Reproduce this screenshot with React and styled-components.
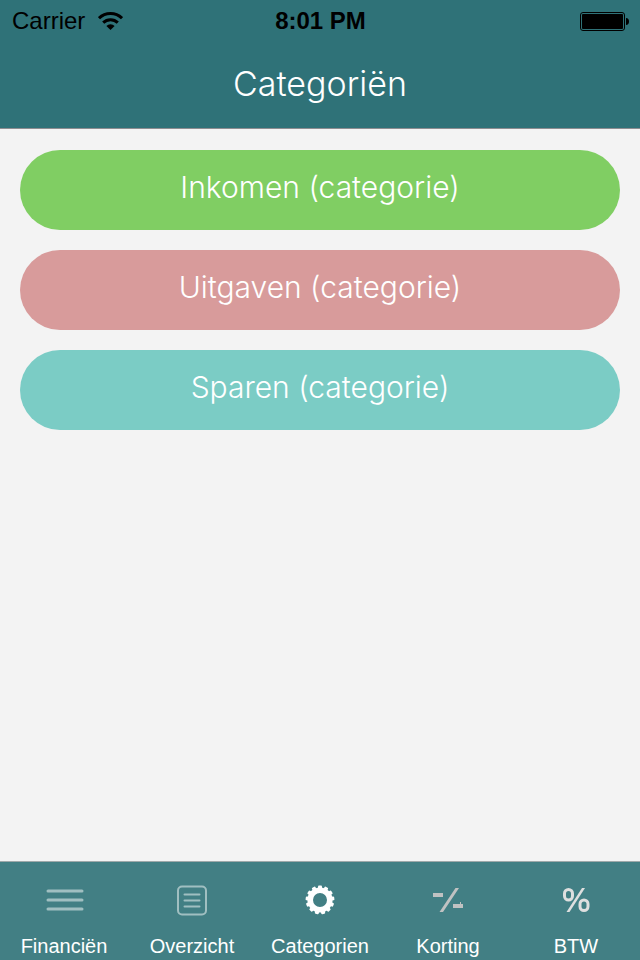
import React from 'react';
import styled, { createGlobalStyle } from 'styled-components';

const GlobalStyle = createGlobalStyle`
  * {
    box-sizing: border-box;
  }
  body {
    margin: 0;
    background: #f3f3f3;
  }
`;

const Screen = styled.div`
  display: flex;
  flex-direction: column;
  min-height: 100vh;
  font-family: 'Liberation Sans', Arial, sans-serif;
`;

const Header = styled.header`
  background: #2f7278;
  border-bottom: 1px solid #8d8d91;
`;

const StatusBar = styled.div`
  display: grid;
  grid-template-columns: 1fr auto 1fr;
  align-items: center;
  height: 40px;
  padding: 1px 11px 0 12px;
  font-size: 24px;
  line-height: 40px;
  color: #000;
`;

const Carrier = styled.div`
  display: flex;
  align-items: center;
  gap: 13px;
`;

const Time = styled.time`
  font-weight: bold;
`;

const BatteryIcon = styled.svg`
  justify-self: end;
`;

const Title = styled.h1`
  margin: 0;
  height: 88px;
  font-family: Inter, sans-serif;
  font-size: 34px;
  font-weight: 300;
  line-height: 88px;
  text-align: center;
  color: #fff;
`;

const Categories = styled.main`
  display: flex;
  flex: 1;
  flex-direction: column;
  gap: 20px;
  padding: 21px 20px;
`;

const CategoryButton = styled.button`
  height: 80px;
  padding: 0 20px 6px;
  border: 0;
  border-radius: 40px;
  background: ${props => props.$color};
  font-family: Inter, sans-serif;
  font-size: 30px;
  font-weight: 300;
  color: #fff;
  cursor: pointer;
`;

const TabBar = styled.nav`
  display: grid;
  grid-template-columns: repeat(5, 1fr);
  border-top: 1px solid #9fa9aa;
  background: #427f84;
`;

const Tab = styled.a`
  display: flex;
  flex-direction: column;
  align-items: center;
  gap: 10px;
  height: 98px;
  padding-top: 18px;
  font-size: 20px;
  line-height: 32px;
  color: #fff;
  text-decoration: none;
`;

const TabIcon = styled.svg`
  width: 40px;
  height: 40px;
  flex: none;
`;

const TEETH = 13;

const MenuIcon = () => (
  <TabIcon viewBox="0 0 40 40" stroke="#a0bfc1" strokeWidth="3" strokeLinecap="round">
    <path d="M4 11h34M4 20h34M4 29h34" />
  </TabIcon>
);

const ListIcon = () => (
  <TabIcon viewBox="0 0 40 40" fill="none" stroke="#a0bfc1" strokeWidth="2">
    <rect x="6" y="6.5" width="28" height="28" rx="4" />
    <path d="M12.500 14.500h15M12.500 20.500h15M12.500 26.500h15" strokeLinecap="round" />
  </TabIcon>
);

const GearIcon = () => (
  <TabIcon viewBox="0 0 40 40" fill="none" stroke="#fff">
    <circle cx="20" cy="20" r="9.8" strokeWidth="5.6" />
    {Array.from({ length: TEETH }, (_, i) => (
      <rect
        key={i}
        x="18"
        y="5.6"
        width="4"
        height="6"
        rx="1"
        fill="#fff"
        stroke="none"
        transform={`rotate(${(i * 360) / TEETH} 20 20)`}
      />
    ))}
  </TabIcon>
);

const DiscountIcon = () => (
  <TabIcon viewBox="0 0 40 40" fill="#c0c2c2">
    <path d="M5 13h10v4H5zM25 24h7v-2h1v2h2v4H25zM27.500 8h3.500L15 32h-3.500z" />
  </TabIcon>
);

const PercentIcon = () => (
  <TabIcon viewBox="0 0 40 40" fill="none" stroke="#dedfdf" strokeWidth="3">
    <rect x="8.5" y="9.5" width="8" height="10.5" rx="4" />
    <rect x="24" y="20" width="8" height="10.5" rx="4" />
    <path d="M26 8h3L13.500 32h-3z" fill="#dedfdf" stroke="none" />
  </TabIcon>
);

const categories = [
  { id: 'inkomen', label: 'Inkomen (categorie)', color: '#80ce63' },
  { id: 'uitgaven', label: 'Uitgaven (categorie)', color: '#d89b9b' },
  { id: 'sparen', label: 'Sparen (categorie)', color: '#7bccc5' },
];

const tabs = [
  { id: 'financien', label: 'Financiën', Icon: MenuIcon },
  { id: 'overzicht', label: 'Overzicht', Icon: ListIcon },
  { id: 'categorien', label: 'Categorien', Icon: GearIcon },
  { id: 'korting', label: 'Korting', Icon: DiscountIcon },
  { id: 'btw', label: 'BTW', Icon: PercentIcon },
];

const App = () => (
  <>
    <GlobalStyle />
    <Screen>
      <Header>
        <StatusBar>
          <Carrier>
            Carrier
            <svg width="25" height="18" viewBox="0 0 25 18" fill="none" stroke="#000">
              <path d="M1 6.2a16.5 16.5 0 0 1 23 0" strokeWidth="3" />
              <path d="M5.2 10.6a10.5 10.5 0 0 1 14.6 0" strokeWidth="3" />
              <path d="M12.5 18L8.4 13.9a5.8 5.8 0 0 1 8.2 0z" fill="#000" stroke="none" />
            </svg>
          </Carrier>
          <Time>8:01 PM</Time>
          <BatteryIcon width="49" height="19" viewBox="0 0 49 19">
            <rect x="0.5" y="0.5" width="44" height="18" rx="2.5" fill="none" stroke="#000" />
            <rect x="2" y="2" width="41" height="15" rx="1" />
            <path d="M46 6c2 0 3 1.500 3 3.500s-1 3.500-3 3.500z" />
          </BatteryIcon>
        </StatusBar>
        <Title>Categoriën</Title>
      </Header>
      <Categories>
        {categories.map(({ id, label, color }) => (
          <CategoryButton key={id} type="button" $color={color}>
            {label}
          </CategoryButton>
        ))}
      </Categories>
      <TabBar>
        {tabs.map(({ id, label, Icon }) => (
          <Tab
            key={id}
            href={`#${id}`}
            aria-current={id === 'categorien' ? 'page' : undefined}>
            <Icon />
            {label}
          </Tab>
        ))}
      </TabBar>
    </Screen>
  </>
);

export default App;
